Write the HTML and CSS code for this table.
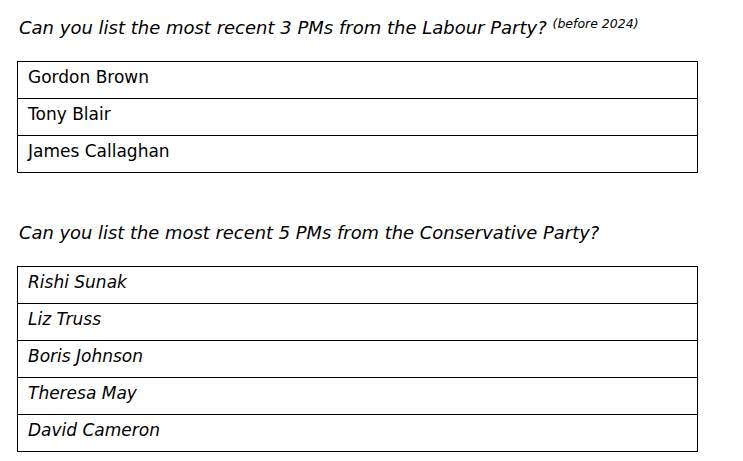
FILE: index.html
```html
<!DOCTYPE html>
<html lang="en">
<head>
<meta charset="utf-8">
<title>Prime Ministers quiz</title>
<link rel="stylesheet" href="styles.css">
</head>
<body>
<main class="sheet">
  <section class="question">
    <h2 class="prompt">Can you list the most recent 3 PMs from the Labour Party? <sup class="note">(before 2024)</sup></h2>
    <div class="answers">
      <div class="row">Gordon Brown</div>
      <div class="row">Tony Blair</div>
      <div class="row">James Callaghan</div>
    </div>
  </section>
  <section class="question second">
    <h2 class="prompt">Can you list the most recent 5 PMs from the Conservative Party?</h2>
    <div class="answers italic">
      <div class="row">Rishi Sunak</div>
      <div class="row">Liz Truss</div>
      <div class="row">Boris Johnson</div>
      <div class="row">Theresa May</div>
      <div class="row">David Cameron</div>
    </div>
  </section>
</main>
</body>
</html>
```

FILE: styles.css
```css
html, body {
  margin: 0;
  padding: 0;
  background: #ffffff;
}
body {
  font-family: "DejaVu Sans", "Liberation Sans", sans-serif;
  color: #000;
  width: 743px;
  height: 461px;
  overflow: hidden;
}
.sheet {
  display: flex;
  flex-direction: column;
  padding: 15px 0 0 17px;
}
.question {
  display: flex;
  flex-direction: column;
}
.second {
  margin-top: 47px;
}
.prompt {
  margin: 0 0 0 2px;
  font-size: 18px;
  font-weight: normal;
  font-style: oblique;
  line-height: 26px;
  height: 26px;
}
.second .prompt {
  font-size: 17.9px;
}
.note {
  font-size: 12.5px;
  vertical-align: 6px;
  line-height: 0;
  font-style: oblique;
}
.answers {
  margin-top: 20px;
  width: 679px;
  border: 1px solid #000;
  border-bottom: none;
}
.row {
  height: 36px;
  border-bottom: 1px solid #000;
  font-size: 17px;
  line-height: 30px;
  padding-left: 10px;
}
.italic .row {
  font-style: oblique;
}
```
